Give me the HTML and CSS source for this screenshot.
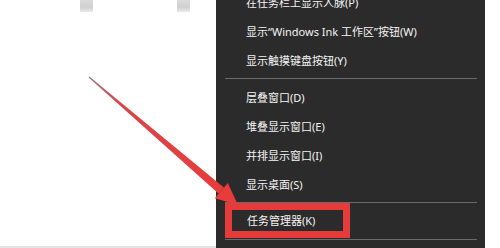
FILE: index.html
```html
<!DOCTYPE html>
<html lang="zh-CN">
<head>
<meta charset="utf-8">
<link rel="stylesheet" href="styles.css">
</head>
<body>
<div class="screen">
  <div class="desktop">
    <div class="icon icon-a"></div>
    <div class="icon icon-b"></div>
    <div class="floor"></div>
  </div>
  <div class="menu">
    <ul class="list">
      <li class="item">在任务栏上显示人脉(P)</li>
      <li class="item">显示“Windows Ink 工作区”按钮(W)</li>
      <li class="item">显示触摸键盘按钮(Y)</li>
      <li class="sep sep-a"></li>
      <li class="item">层叠窗口(D)</li>
      <li class="item">堆叠显示窗口(E)</li>
      <li class="item">并排显示窗口(I)</li>
      <li class="item">显示桌面(S)</li>
      <li class="sep sep-b"></li>
      <li class="hl-row"><span class="hl-box">任务管理器(K)</span></li>
      <li class="sep sep-c"></li>
    </ul>
  </div>
  <div class="right"></div>
  <svg class="arrow" width="500" height="248" viewBox="0 0 500 248" xmlns="http://www.w3.org/2000/svg">
    <defs>
      <linearGradient id="shaft" x1="89" y1="77" x2="221" y2="191" gradientUnits="userSpaceOnUse">
        <stop offset="0" stop-color="#9a7a80"/>
        <stop offset="0.25" stop-color="#d9454a"/>
        <stop offset="1" stop-color="#e83c3c"/>
      </linearGradient>
    </defs>
    <polygon points="88.6,77.4 89.4,76.6 223.9,187.6 218.7,193.7" fill="url(#shaft)"/>
    <polygon points="214.8,198.3 227.8,183.1 238,205" fill="#e83c3c"/>
  </svg>
</div>
</body>
</html>
```
FILE: styles.css
```css
html, body {
  margin: 0;
  padding: 0;
  background: #ffffff;
}
.screen {
  position: relative;
  width: 500px;
  height: 248px;
  overflow: hidden;
  display: flex;
}
.desktop {
  position: relative;
  width: 216px;
  height: 248px;
  background: #ffffff;
}
.icon {
  position: absolute;
  top: 0;
  width: 13px;
  height: 12px;
  background: linear-gradient(#d2d2d2, #c4c4c4 60%, #e6e6e6);
  opacity: 0.8;
}
.icon-a { left: 80px; }
.icon-b { left: 177px; }
.floor {
  position: absolute;
  left: 0;
  bottom: 0;
  width: 216px;
  height: 2px;
  background: #e4e4e4;
}
.menu {
  width: 269px;
  height: 248px;
  background: #2b2b2b;
  overflow: hidden;
}
.right {
  flex: 1;
  background: #ffffff;
}
.list {
  list-style: none;
  margin: -12.5px 0 0 0;
  padding: 0;
}
.item {
  height: 29px;
  line-height: 29px;
  padding-left: 30px;
  color: #f4f4f4;
  font-family: "Noto Sans", "Noto Sans CJK SC", sans-serif;
  font-size: 11px;
  white-space: nowrap;
}
.sep {
  height: 1px;
  background: #6b6b6b;
  margin-left: 9px;
  margin-right: 8px;
}
.sep-a { margin-top: 3px; margin-bottom: 4px; }
.sep-b { margin-top: 3.5px; }
.sep-c { margin-top: 1px; }
.hl-row {
  height: 35px;
  padding-left: 9px;
}
.hl-box {
  display: block;
  box-sizing: border-box;
  width: 125px;
  height: 35px;
  border: 7px solid #e63b3b;
  padding-left: 15px;
  line-height: 21px;
  color: #f4f4f4;
  font-family: "Noto Sans", "Noto Sans CJK SC", sans-serif;
  font-size: 11px;
  white-space: nowrap;
}
.arrow {
  position: absolute;
  left: 0;
  top: 0;
  pointer-events: none;
}
```
